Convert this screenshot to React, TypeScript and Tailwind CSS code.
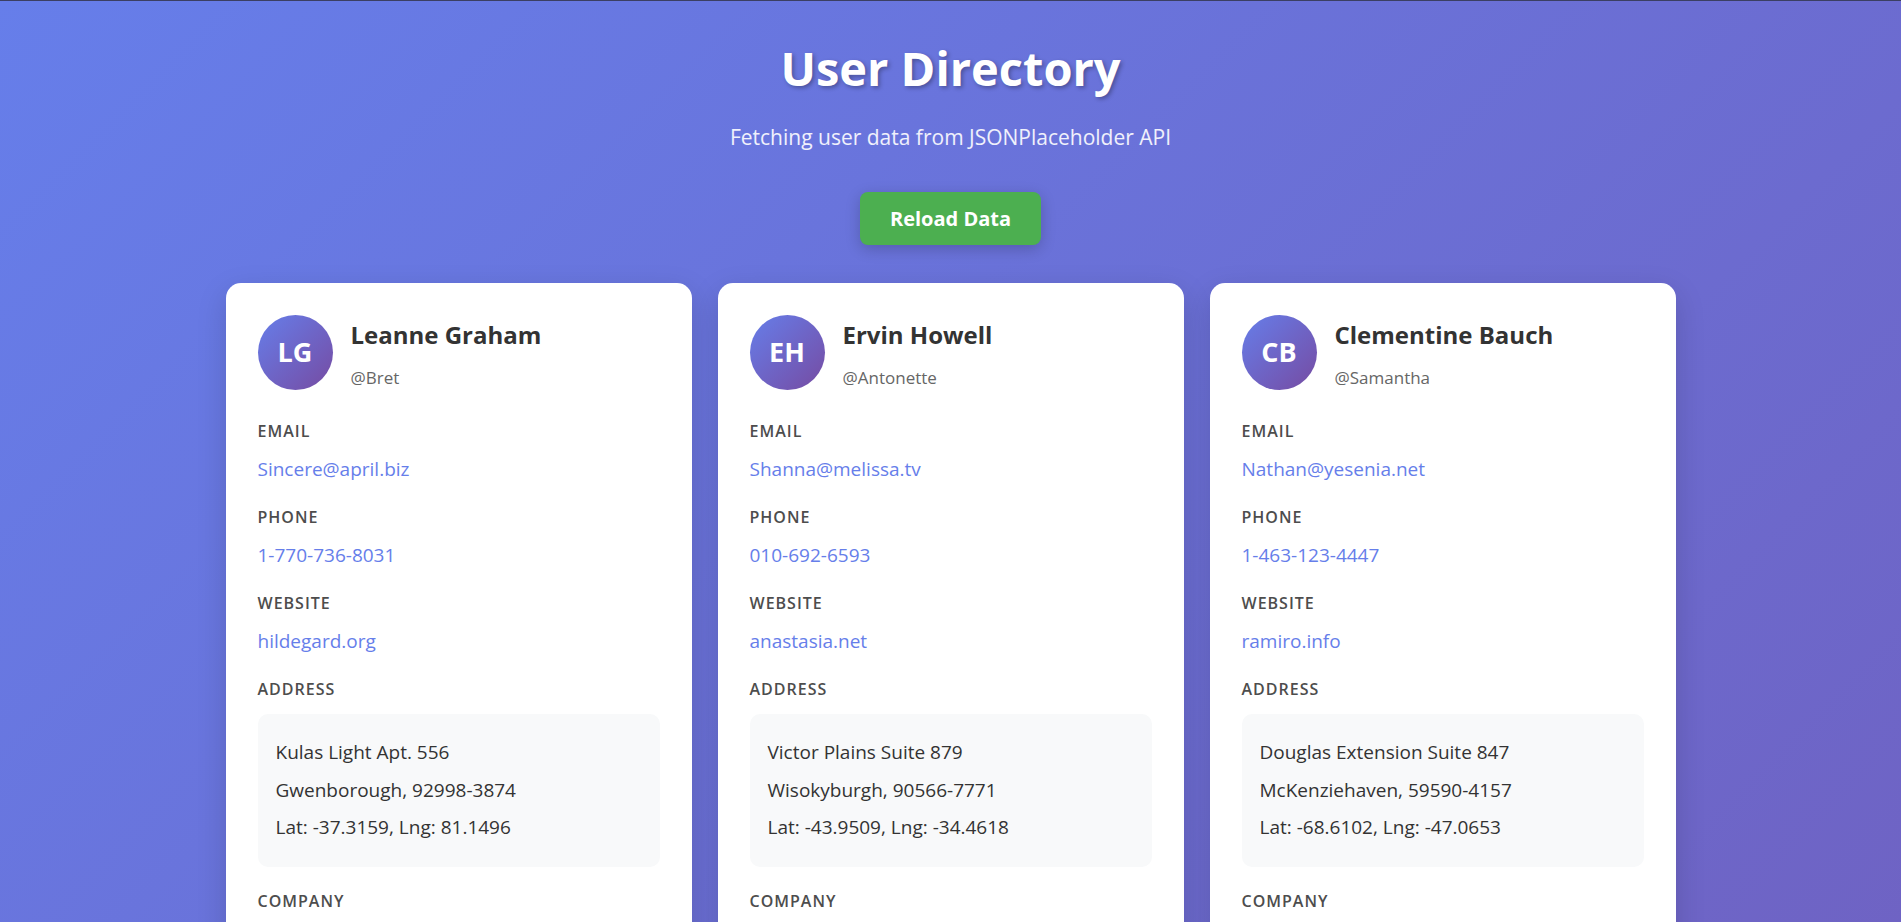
type User = {
  name: string;
  username: string;
  email: string;
  phone: string;
  website: string;
  street: string;
  suite: string;
  city: string;
  zipcode: string;
  lat: string;
  lng: string;
  company: string;
  catchPhrase: string;
  bs: string;
};

const users: User[] = [
  { name: 'Leanne Graham', username: 'Bret', email: 'Sincere@april.biz', phone: '1-770-736-8031', website: 'hildegard.org', street: 'Kulas Light', suite: 'Apt. 556', city: 'Gwenborough', zipcode: '92998-3874', lat: '-37.3159', lng: '81.1496', company: 'Romaguera-Crona', catchPhrase: 'Multi-layered client-server neural-net', bs: 'harness real-time e-markets' },
  { name: 'Ervin Howell', username: 'Antonette', email: 'Shanna@melissa.tv', phone: '010-692-6593', website: 'anastasia.net', street: 'Victor Plains', suite: 'Suite 879', city: 'Wisokyburgh', zipcode: '90566-7771', lat: '-43.9509', lng: '-34.4618', company: 'Deckow-Crist', catchPhrase: 'Proactive didactic contingency', bs: 'synergize scalable supply-chains' },
  { name: 'Clementine Bauch', username: 'Samantha', email: 'Nathan@yesenia.net', phone: '1-463-123-4447', website: 'ramiro.info', street: 'Douglas Extension', suite: 'Suite 847', city: 'McKenziehaven', zipcode: '59590-4157', lat: '-68.6102', lng: '-47.0653', company: 'Romaguera-Jacobson', catchPhrase: 'Face to face bifurcated interface', bs: 'e-enable strategic applications' },
  { name: 'Patricia Lebsack', username: 'Karianne', email: 'Julianne.OConner@kory.org', phone: '493-170-9623', website: 'kale.biz', street: 'Hoeger Mall', suite: 'Apt. 692', city: 'South Elvis', zipcode: '53919-4257', lat: '29.4572', lng: '-164.2990', company: 'Robel-Corkery', catchPhrase: 'Multi-tiered zero tolerance productivity', bs: 'transition cutting-edge web services' },
  { name: 'Chelsey Dietrich', username: 'Kamren', email: 'Lucio_Hettinger@annie.ca', phone: '(254)954-1289', website: 'demarco.info', street: 'Skiles Walks', suite: 'Suite 351', city: 'Roscoeview', zipcode: '33263', lat: '-31.8129', lng: '62.5342', company: 'Keebler LLC', catchPhrase: 'User-centric fault-tolerant solution', bs: 'revolutionize end-to-end systems' },
  { name: 'Mrs. Dennis Schulist', username: 'Leopoldo_Corkery', email: 'Karley_Dach@jasper.info', phone: '1-477-935-8478', website: 'ola.org', street: 'Norberto Crossing', suite: 'Apt. 950', city: 'South Christy', zipcode: '23505-1337', lat: '-71.4197', lng: '71.7478', company: 'Considine-Lockman', catchPhrase: 'Synchronised bottom-line interface', bs: 'e-enable innovative applications' },
  { name: 'Kurtis Weissnat', username: 'Elwyn.Skiles', email: 'Telly.Hoeger@billy.biz', phone: '210.067.6132', website: 'elvis.io', street: 'Rex Trail', suite: 'Suite 280', city: 'Howemouth', zipcode: '58804-1099', lat: '24.8918', lng: '21.8984', company: 'Johns Group', catchPhrase: 'Configurable multimedia task-force', bs: 'generate enterprise e-tailers' },
  { name: 'Nicholas Runolfsdottir V', username: 'Maxime_Nienow', email: 'Sherwood@rosamond.me', phone: '586.493.6943', website: 'jacynthe.com', street: 'Ellsworth Summit', suite: 'Suite 729', city: 'Aliyaview', zipcode: '45169', lat: '-14.3990', lng: '-120.7677', company: 'Abernathy Group', catchPhrase: 'Implemented secondary concept', bs: 'e-enable extensible e-tailers' },
  { name: 'Glenna Reichert', username: 'Delphine', email: 'Chaim_McDermott@dana.io', phone: '(775)976-6794', website: 'conrad.com', street: 'Dayna Park', suite: 'Suite 449', city: 'Bartholomebury', zipcode: '76495-3109', lat: '24.6463', lng: '-168.8889', company: 'Yost and Sons', catchPhrase: 'Switchable contextually-based project', bs: 'aggregate real-time technologies' },
  { name: 'Clementina DuBuque', username: 'Moriah.Stanton', email: 'Rey.Padberg@karina.biz', phone: '024-648-3804', website: 'ambrose.net', street: 'Kattie Turnpike', suite: 'Suite 198', city: 'Lebsackbury', zipcode: '31428-2261', lat: '-38.2386', lng: '57.2232', company: 'Hoeger LLC', catchPhrase: 'Centralized empowering task-force', bs: 'target end-to-end models' },
];

function initials(name: string) {
  return name
    .split(' ')
    .filter((w) => !w.endsWith('.'))
    .map((w) => w[0])
    .slice(0, 2)
    .join('');
}

function Label({ children }: { children: React.ReactNode }) {
  return (
    <div className="text-[16px] font-semibold uppercase tracking-[1px] leading-[20px] text-[#4d4d4d]">
      {children}
    </div>
  );
}

function Field({ label, value }: { label: string; value: string }) {
  return (
    <div className="mb-[26px]">
      <Label>{label}</Label>
      <div className="mt-4 text-[19px] leading-[24px] text-[#667eea]">{value}</div>
    </div>
  );
}

function UserCard({ user }: { user: User }) {
  return (
    <div className="rounded-[15px] bg-white p-8 shadow-[0_10px_30px_rgba(0,0,0,0.15)]">
      <div className="mb-[31px] flex items-center gap-[18px]">
        <div className="flex h-[75px] w-[75px] shrink-0 items-center justify-center rounded-full bg-[linear-gradient(135deg,#667eea_0%,#764ba2_100%)] text-[27px] font-bold text-white">
          {initials(user.name)}
        </div>
        <div className="mt-[4px]">
          <div className="text-[24px] font-bold leading-[32px] text-[#333]">{user.name}</div>
          <div className="mt-[15px] text-[17px] leading-[24px] text-[#666]">@{user.username}</div>
        </div>
      </div>

      <Field label="Email" value={user.email} />
      <Field label="Phone" value={user.phone} />
      <Field label="Website" value={user.website} />

      <div className="mb-[24px]">
        <Label>Address</Label>
        <div className="mt-[15px] rounded-[10px] bg-[#f8f9fa] px-[18px] py-5 text-[19px] leading-[37.5px] text-[#333]">
          <div>
            {user.street} {user.suite}
          </div>
          <div>
            {user.city}, {user.zipcode}
          </div>
          <div>
            Lat: {user.lat}, Lng: {user.lng}
          </div>
        </div>
      </div>

      <div>
        <Label>Company</Label>
        <div className="mt-4 text-[19px] font-semibold leading-[24px] text-[#333]">{user.company}</div>
        <div className="mt-2 text-[17px] italic leading-[24px] text-[#666]">"{user.catchPhrase}"</div>
        <div className="mt-1 text-[16px] leading-[22px] text-[#888]">{user.bs}</div>
      </div>
    </div>
  );
}

export default function App() {
  return (
    <div className="min-h-screen border-t border-[#3b3f63] bg-[linear-gradient(135deg,#667eea_0%,#764ba2_100%)] px-5 pb-10 pt-[35px] font-['Open_Sans','Noto_Sans',sans-serif]">
      <div className="text-center">
        <h1 className="text-[47px] font-bold leading-[64px] text-white [text-shadow:2px_2px_4px_rgba(0,0,0,0.3)]">
          User Directory
        </h1>
        <p className="mt-[23px] text-[21px] leading-[28px] text-white/90">
          Fetching user data from JSONPlaceholder API
        </p>
        <button
          type="button"
          className="mt-[41px] rounded-[8px] bg-[#4caf50] px-[30px] py-[15px] text-[20px] font-bold leading-[23px] text-white shadow-[0_4px_15px_rgba(0,0,0,0.2)]"
        >
          Reload Data
        </button>
      </div>

      <div className="mx-auto mt-[38px] grid max-w-[1450px] grid-cols-3 gap-[26px]">
        {users.map((u) => (
          <UserCard key={u.username} user={u} />
        ))}
      </div>
    </div>
  );
}
